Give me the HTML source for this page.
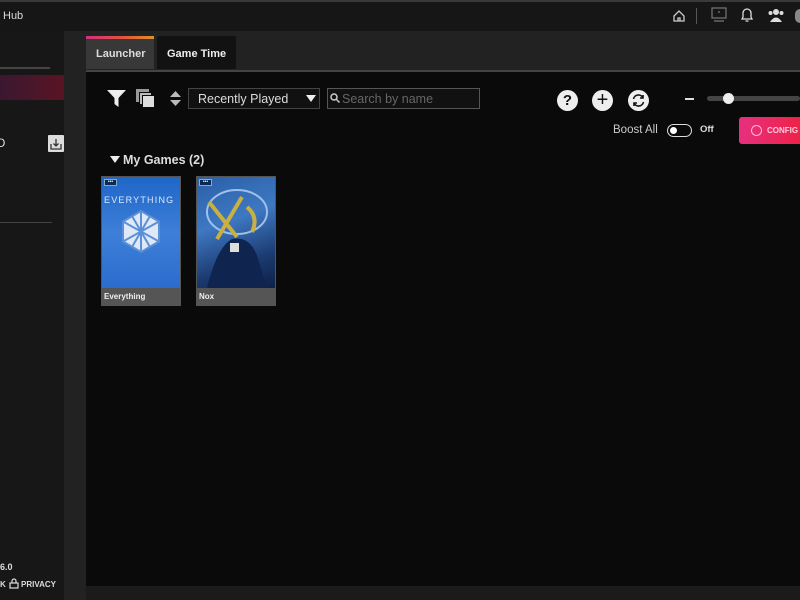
<!DOCTYPE html>
<html><head><meta charset="utf-8"><style>
*{margin:0;padding:0;box-sizing:border-box}
body{width:800px;height:600px;background:#1b1b1b;font-family:"Liberation Sans",sans-serif;color:#fff;position:relative;overflow:hidden}
.a{position:absolute}
</style></head><body>
<div class="a" style="left:0;top:0;width:800px;height:2px;background:#3a3a3a"></div>
<div class="a" style="left:0;top:2px;width:800px;height:29px;background:#161616"></div>
<div class="a" style="left:3px;top:10px;font-size:11px;color:#ddd">Hub</div>
<svg class="a" style="left:672px;top:9px" width="14" height="14" viewBox="0 0 14 14" fill="none" stroke="#ccc" stroke-width="1.3"><path d="M2 7 L7 2 L12 7 V12 H2 Z M6 12 V9 H8 V12"/></svg>
<div class="a" style="left:696px;top:8px;width:1px;height:16px;background:#555"></div>
<svg class="a" style="left:711px;top:7px" width="16" height="16" viewBox="0 0 16 16" fill="none" stroke="#777" stroke-width="1.2"><rect x="1" y="1" width="14" height="10"/><path d="M3 14 H13 M7 5 h2"/></svg>
<svg class="a" style="left:740px;top:7px" width="14" height="16" viewBox="0 0 14 16" fill="none" stroke="#ddd" stroke-width="1.3"><path d="M2 12 H12 L11 10 V6 A4 4 0 0 0 3 6 V10 Z M5.5 14 H8.5"/></svg>
<svg class="a" style="left:767px;top:8px" width="18" height="14" viewBox="0 0 18 14" fill="#ddd"><circle cx="9" cy="4" r="3"/><path d="M3 14 Q9 5 15 14Z"/><circle cx="3.5" cy="5" r="2"/><circle cx="14.5" cy="5" r="2"/></svg>
<div class="a" style="left:795px;top:9px;width:10px;height:14px;border-radius:5px;background:#888"></div>
<div class="a" style="left:0;top:31px;width:64px;height:569px;background:#171717"></div>
<div class="a" style="left:0;top:67px;width:50px;height:2px;background:#444"></div>
<div class="a" style="left:0;top:75px;width:64px;height:25px;background:linear-gradient(90deg,#3a1830,#5a1424)"></div>
<div class="a" style="left:-4px;top:136px;font-size:12px;color:#ddd">O</div>
<div class="a" style="left:48px;top:135px;width:16px;height:17px;background:#ddd;border-radius:1px"></div>
<svg class="a" style="left:50px;top:138px" width="12" height="12" viewBox="0 0 12 12" fill="none" stroke="#333" stroke-width="1.3"><path d="M1 6 V11 H11 V6 M6 1 V8 M3.5 5.5 L6 8 L8.5 5.5"/></svg>
<div class="a" style="left:0;top:222px;width:52px;height:1px;background:#444"></div>
<div class="a" style="left:0;top:562px;font-size:9px;font-weight:bold;color:#ddd">6.0</div>
<div class="a" style="left:0;top:580px;font-size:8px;font-weight:bold;color:#ddd">K</div>
<svg class="a" style="left:9px;top:578px" width="10" height="11" viewBox="0 0 10 11" fill="none" stroke="#ddd" stroke-width="1.2"><rect x="1" y="5" width="8" height="5"/><path d="M3 5 V3 A2 2 0 0 1 7 3 V5"/></svg>
<div class="a" style="left:21px;top:580px;font-size:8px;font-weight:bold;color:#ddd">PRIVACY</div>
<div class="a" style="left:64px;top:31px;width:22px;height:569px;background:#222"></div>
<div class="a" style="left:86px;top:31px;width:714px;height:41px;background:#222"></div>
<div class="a" style="left:86px;top:36px;width:68px;height:33px;background:#383838"></div>
<div class="a" style="left:86px;top:36px;width:68px;height:3px;background:linear-gradient(90deg,#d03080,#e05040,#e09020)"></div>
<div class="a" style="left:96px;top:48px;font-size:11px;font-weight:bold;color:#ddd">Launcher</div>
<div class="a" style="left:157px;top:36px;width:79px;height:33px;background:#121212;border-radius:2px 2px 0 0"></div>
<div class="a" style="left:167px;top:48px;font-size:11px;font-weight:bold;color:#eee">Game Time</div>
<div class="a" style="left:86px;top:70px;width:714px;height:2px;background:#444"></div>
<div class="a" style="left:86px;top:72px;width:714px;height:514px;background:#0a0a0a"></div>
<svg class="a" style="left:107px;top:89px" width="19" height="19" viewBox="0 0 19 19" fill="#eee"><path d="M0 1 H19 L11.5 9 V18 L7.5 15 V9 Z"/></svg>
<div class="a" style="left:136px;top:89px;width:13px;height:13px;background:#999"></div>
<div class="a" style="left:139px;top:92px;width:13px;height:13px;background:#bbb;border:1px solid #0a0a0a"></div>
<div class="a" style="left:142px;top:95px;width:13px;height:13px;background:#ddd;border:1px solid #0a0a0a"></div>
<svg class="a" style="left:170px;top:91px" width="11" height="15" viewBox="0 0 11 15" fill="#bbb"><path d="M5.5 0 L11 6 H0Z M0 9 H11 L5.5 15Z"/></svg>
<div class="a" style="left:188px;top:88px;width:132px;height:21px;border:1px solid #444;background:#111"></div>
<div class="a" style="left:198px;top:92px;font-size:12.5px;color:#ddd">Recently Played</div>
<svg class="a" style="left:306px;top:95px" width="10" height="7" viewBox="0 0 10 7" fill="#eee"><path d="M0 0 H10 L5 7Z"/></svg>
<div class="a" style="left:327px;top:88px;width:153px;height:21px;border:1px solid #555;background:#111"></div>
<svg class="a" style="left:330px;top:93px" width="10" height="10" viewBox="0 0 10 10" fill="none" stroke="#ccc" stroke-width="1.5"><circle cx="4" cy="4" r="3"/><path d="M6.5 6.5 L9.5 9.5"/></svg>
<div class="a" style="left:342px;top:92px;font-size:12.5px;color:#666">Search by name</div>
<div class="a" style="left:557px;top:90px;width:21px;height:21px;border-radius:50%;background:#eee;color:#111;font-size:15px;font-weight:bold;text-align:center;line-height:21px">?</div>
<div class="a" style="left:592px;top:90px;width:21px;height:21px;border-radius:50%;background:#eee;color:#111;font-size:20px;text-align:center;line-height:21px">+</div>
<div class="a" style="left:628px;top:90px;width:21px;height:21px;border-radius:50%;background:#eee"></div>
<svg class="a" style="left:631px;top:93px" width="15" height="15" viewBox="0 0 15 15" fill="none" stroke="#111" stroke-width="1.6"><path d="M2.5 6 A5 5 0 0 1 12 5 M12.5 9 A5 5 0 0 1 3 10"/><path d="M12 2 V5 H9 M3 13 V10 H6"/></svg>
<div class="a" style="left:685px;top:98px;width:9px;height:2px;background:#ddd"></div>
<div class="a" style="left:707px;top:96px;width:93px;height:5px;border-radius:3px;background:#444"></div>
<div class="a" style="left:723px;top:93px;width:11px;height:11px;border-radius:50%;background:#eee"></div>
<div class="a" style="left:613px;top:124px;font-size:11.5px;color:#ccc">Boost All</div>
<div class="a" style="left:667px;top:124px;width:25px;height:13px;border:1.5px solid #ddd;border-radius:7px"></div>
<div class="a" style="left:670px;top:127px;width:7px;height:7px;border-radius:50%;background:#fff"></div>
<div class="a" style="left:700px;top:124px;font-size:9.5px;font-weight:bold;color:#ddd">Off</div>
<div class="a" style="left:739px;top:117px;width:70px;height:27px;border-radius:3px;background:linear-gradient(90deg,#e6307f,#f02040)"></div>
<div class="a" style="left:751px;top:125px;width:11px;height:11px;border:1.3px solid #fbd;border-radius:50%"></div>
<div class="a" style="left:767px;top:126px;font-size:8px;font-weight:bold;color:#fcd">CONFIG</div>
<svg class="a" style="left:110px;top:156px" width="10" height="8" viewBox="0 0 10 8" fill="#eee"><path d="M0 0 H10 L5 7Z"/></svg>
<div class="a" style="left:123px;top:153px;font-size:12.5px;font-weight:bold;color:#ddd">My Games (2)</div>
<div class="a" style="left:101px;top:176px;width:80px;height:130px;background:#555"></div>
<div class="a" style="left:102px;top:177px;width:78px;height:111px;background:linear-gradient(180deg,#1f66c8,#3d7fd8 50%,#2c6ccc)"></div>
<div class="a" style="left:104px;top:179px;width:13px;height:7px;background:#0b2a55;border:1px solid #8ab;font-size:5px;line-height:4px;text-align:center;color:#fff">•••</div>
<div class="a" style="left:104px;top:195px;width:76px;font-size:9px;letter-spacing:1.2px;color:#dde8f8">EVERYTHING</div>
<svg class="a" style="left:120px;top:209px" width="42" height="45" viewBox="0 0 42 45" fill="#dfe8f6" stroke="#5b8fd6" stroke-width="2"><path d="M21 2 L39 12.5 V32.5 L21 43 L3 32.5 V12.5 Z"/><path d="M3 12.5 L39 32.5 M39 12.5 L3 32.5 M21 2 V43 M12 7 L30 38 M30 7 L12 38" fill="none"/></svg>
<div class="a" style="left:104px;top:292px;font-size:8px;font-weight:bold;color:#eee">Everything</div>
<div class="a" style="left:196px;top:176px;width:80px;height:130px;background:#555"></div>
<div class="a" style="left:197px;top:177px;width:78px;height:111px;background:linear-gradient(160deg,#2a5fa8,#3e78c2 40%,#1b3a70 75%,#0e2048)"></div>
<svg class="a" style="left:197px;top:177px" width="78" height="111" viewBox="0 0 78 111" fill="none"><ellipse cx="40" cy="35" rx="30" ry="22" stroke="#9fc0e8" stroke-width="2"/><path d="M12 25 L40 60 M45 20 L20 62 M50 30 Q62 40 55 55" stroke="#c9b040" stroke-width="4"/><path d="M10 111 Q20 70 35 62 Q55 58 62 85 L70 111Z" fill="#102450"/><rect x="33" y="66" width="9" height="9" fill="#ddd"/></svg>
<div class="a" style="left:199px;top:179px;width:13px;height:7px;background:#0b2a55;border:1px solid #8ab;font-size:5px;line-height:4px;text-align:center;color:#fff">•••</div>
<div class="a" style="left:199px;top:292px;font-size:8px;font-weight:bold;color:#eee">Nox</div>
</body></html>
